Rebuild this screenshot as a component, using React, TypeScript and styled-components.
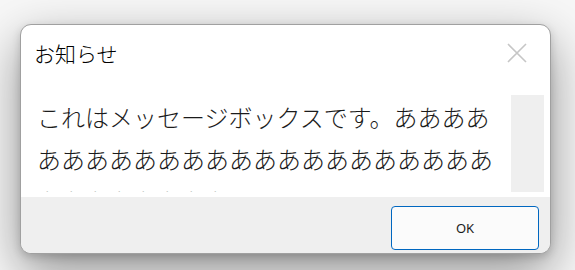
import React from "react";
import styled, { createGlobalStyle } from "styled-components";

const GlobalStyle = createGlobalStyle`
    html, body {
        margin: 0;
        padding: 0;
        background: #f7f7f7;
        width: 575px;
        height: 270px;
        overflow: hidden;
    }
    body {
        font-family: "Noto Sans CJK JP", "Noto Sans", sans-serif;
        color: #1b1b1b;
    }
`;

const Stage = styled.div`
    padding: 24px 0 0 20px;
`;

const Dialog = styled.div`
    width: 529px;
    height: 228px;
    border: 1px solid #a0a0a0;
    border-radius: 11px;
    background: #ffffff;
    overflow: hidden;
    display: flex;
    flex-direction: column;
    box-shadow: 0 18px 50px rgba(0, 0, 0, 0.42), 0 3px 8px rgba(0, 0, 0, 0.16);
`;

const Header = styled.div`
    height: 70px;
    display: flex;
    align-items: flex-start;
    justify-content: space-between;
    padding: 14px 23px 0 13px;
    box-sizing: border-box;
`;

const Title = styled.h1`
    margin: 0;
    font-size: 21px;
    font-weight: 300;
    line-height: 28px;
    color: #000;
`;

const CloseButton = styled.button`
    width: 20px;
    height: 20px;
    margin-top: 4px;
    padding: 0;
    border: none;
    background: transparent;
    display: flex;
    cursor: pointer;
`;

const Body = styled.div`
    height: 97px;
    display: flex;
    padding: 0 6px 5px 0;
`;

const Viewport = styled.div`
    flex: 1;
    overflow: hidden;
    padding: 1px 4px 0 16px;
`;

const Message = styled.p`
    margin: 0;
    font-size: 24px;
    line-height: 42px;
    font-weight: 300;
    word-break: break-all;
    color: #1b1b1b;
`;

const ScrollTrack = styled.div`
    width: 33px;
    background: #efefef;
`;

const Footer = styled.div`
    flex: 1;
    background: #efefef;
    display: flex;
    justify-content: flex-end;
    align-items: flex-start;
    padding: 9px 11px 0 0;
`;

const Button = styled.button<{ primary?: boolean }>`
    width: 148px;
    height: 44px;
    border-radius: 4px;
    border: 1px solid ${props => props.primary ? '#0067c0' : '#cccccc'};
    background: #fbfbfb;
    font-family: "Noto Sans", "Liberation Sans", sans-serif;
    font-size: 13px;
    color: #1a1a1a;
    cursor: pointer;
`;

const CloseIcon = () => (
    <svg width="20" height="20" viewBox="0 0 20 20">
        <path d="M1 1 L19 19 M19 1 L1 19" stroke="#c6c6c6" strokeWidth="1.6" fill="none" />
    </svg>
);

const App = () => {
    const text = "これはメッセージボックスです。" + "あ".repeat(31);
    return (
        <>
            <GlobalStyle />
            <Stage>
                <Dialog role="dialog">
                    <Header>
                        <Title>お知らせ</Title>
                        <CloseButton aria-label="閉じる">
                            <CloseIcon />
                        </CloseButton>
                    </Header>
                    <Body>
                        <Viewport>
                            <Message>{text}</Message>
                        </Viewport>
                        <ScrollTrack />
                    </Body>
                    <Footer>
                        <Button primary>OK</Button>
                    </Footer>
                </Dialog>
            </Stage>
        </>
    );
};

export default App;
